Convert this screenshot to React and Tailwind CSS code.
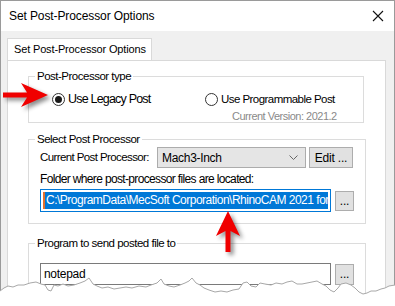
import React from "react";

const tear = [
  [0, 291], [4, 288], [8, 286], [13, 287], [18, 285], [24, 285], [30, 283], [36, 282], [41, 284],
  [45, 285], [48, 290], [51, 291], [54, 285], [58, 286], [63, 284], [68, 286], [74, 285], [80, 283],
  [85, 281], [89, 278], [93, 284], [97, 286], [102, 288], [108, 287], [114, 289], [120, 288],
  [126, 287], [132, 288], [139, 286], [146, 287], [151, 285], [157, 283], [161, 279], [164, 284],
  [169, 286], [174, 287], [180, 285], [185, 283], [189, 281], [192, 278], [196, 283], [200, 285],
  [204, 288], [209, 290], [215, 292], [221, 291], [227, 292], [233, 290], [239, 289], [243, 283],
  [247, 282], [251, 286], [256, 287], [260, 283], [265, 284], [271, 285], [276, 283], [282, 284],
  [287, 282], [292, 281], [297, 284], [302, 284], [307, 283], [312, 282], [317, 281], [322, 284],
  [326, 286], [330, 290], [334, 292], [338, 288], [341, 284], [346, 283], [351, 285], [355, 288],
  [359, 292], [363, 294], [367, 293], [371, 291], [376, 291], [381, 289], [385, 288], [389, 286],
  [395, 285],
];

const tearLine = tear.map(([x, y], i) => `${i ? "L" : "M"}${x},${y}`).join(" ");

const Radio = ({ checked }) => (
  <span className="w-[13px] h-[13px] rounded-full border border-[#333] bg-white flex items-center justify-center shrink-0">
    {checked && <span className="w-[7px] h-[7px] rounded-full bg-[#1a1a1a]" />}
  </span>
);

const Group = ({ title, className, children }) => (
  <fieldset className={`border border-[#dcdcdc] mx-0 px-[11px] ${className}`}>
    <legend className="-ml-[5px] px-[2px] text-[11.5px] leading-[13px] tracking-[-0.5px] whitespace-nowrap">
      {title}
    </legend>
    {children}
  </fieldset>
);

const SmallButton = ({ children, className }) => (
  <div
    className={`bg-[#e1e1e1] border border-[#adadad] flex items-center justify-center text-[12px] tracking-[-0.2px] whitespace-nowrap shrink-0 ${className}`}
  >
    {children}
  </div>
);

export default function App() {
  return (
    <div
      className="relative w-[395px] h-[306px] overflow-hidden bg-white text-black"
      style={{ fontFamily: '"Liberation Sans", Arial, sans-serif' }}
    >
      <div className="w-[395px] h-[306px] border-x border-t border-[#9a9a9a] flex flex-col">
        <div className="h-[30px] bg-white flex items-center justify-between pl-[8px] pr-[9px] shrink-0">
          <span className="text-[12px] tracking-[-0.1px] whitespace-nowrap">Set Post-Processor Options</span>
          <svg width="12" height="12" viewBox="0 0 12 12" className="mr-[1px]">
            <path d="M1 1 L11 11 M11 1 L1 11" stroke="#111" strokeWidth="1.1" />
          </svg>
        </div>

        <div className="flex-1 bg-[#f0f0f0] pl-[6px] pr-[8px] pt-[7px] flex flex-col">
          <div className="w-[145px] h-[22px] bg-white border border-b-0 border-[#d9d9d9] flex items-center pl-[6px] text-[11px] tracking-[-0.15px] whitespace-nowrap">
            Set Post-Processor Options
          </div>

          <div className="flex-1 bg-white border border-[#d9d9d9] pl-[20px] pr-[21px] pt-[9px]">
            <Group title="Post-Processor type" className="h-[53px]">
              <div className="flex mt-[9px]">
                <div className="flex items-center ml-[12px] gap-[3px] w-[153px] h-[14px] shrink-0">
                  <Radio checked />
                  <span className="text-[12.5px] leading-[14px] tracking-[-0.8px] whitespace-nowrap">Use Legacy Post</span>
                </div>
                <div className="flex flex-col">
                  <div className="flex items-center gap-[3px] h-[14px]">
                    <Radio />
                    <span className="text-[11.5px] leading-[14px] tracking-[-0.55px] whitespace-nowrap">Use Programmable Post</span>
                  </div>
                  <span className="ml-[27px] mt-[4px] text-[11px] leading-[13px] text-[#8a8a8a] tracking-[-0.5px] whitespace-nowrap">
                    Current Version: 2021.2
                  </span>
                </div>
              </div>
            </Group>

            <Group title="Select Post Processor" className="h-[91px] mt-[10px]">
              <div className="flex items-center mt-[1px]">
                <span className="text-[11.5px] tracking-[-0.6px] w-[117px] shrink-0 whitespace-nowrap">Current Post Processor:</span>
                <div className="w-[149px] h-[21px] shrink-0 bg-[#e5e5e5] border border-[#acacac] flex items-center justify-between pl-[4px] pr-[7px]">
                  <span className="text-[12px] tracking-[-0.3px] whitespace-nowrap">Mach3-Inch</span>
                  <svg width="9" height="6" viewBox="0 0 9 6">
                    <path d="M0.5 0.5 L4.5 4.5 L8.5 0.5" stroke="#666" strokeWidth="1" fill="none" />
                  </svg>
                </div>
                <SmallButton className="w-[44px] h-[21px] ml-[3px]">Edit ...</SmallButton>
              </div>
              <div className="text-[12px] tracking-[-0.65px] mt-[4px] leading-[14px] whitespace-nowrap">
                Folder where post-processor files are located:
              </div>
              <div className="flex items-center mt-[3px]">
                <div className="w-[291px] h-[23px] shrink-0 border border-[#0078d7] bg-white p-[2px] overflow-hidden">
                  <div className="h-full bg-[#0078d7] text-white text-[12px] leading-[17px] tracking-[-0.5px] whitespace-nowrap overflow-hidden border-l-2 border-[#e07030] pl-[1px]">
                    C:\ProgramData\MecSoft Corporation\RhinoCAM 2021 for Rhino
                  </div>
                </div>
                <SmallButton className="w-[19px] h-[20px] ml-[4px]">...</SmallButton>
              </div>
            </Group>

            <Group title="Program to send posted file to" className="h-[70px] mt-[13px]">
              <div className="flex items-center mt-[13px]">
                <div className="w-[291px] h-[22px] shrink-0 border border-[#7a7a7a] bg-white flex items-center pl-[3px] text-[12px] tracking-[-0.3px]">
                  notepad
                </div>
                <SmallButton className="w-[19px] h-[21px] ml-[4px]">...</SmallButton>
              </div>
            </Group>
          </div>
        </div>
      </div>

      {/* torn paper edge */}
      <svg className="absolute left-0 top-0" width="395" height="306" viewBox="0 0 395 306">
        <path d={`${tearLine} L395,306 L0,306 Z`} fill="#ffffff" />
        <path d={tearLine} fill="none" stroke="#a8a8a8" strokeWidth="1" />
      </svg>

      {/* annotation arrows */}
      <svg
        className="absolute left-0 top-0 drop-shadow-[3px_3px_2px_rgba(0,0,0,0.45)]"
        width="395"
        height="306"
        viewBox="0 0 395 306"
      >
        <path d="M3,92.5 L27,92.5 L21,83 L48,95 L21,107 L27,97.5 L3,97.5 Z" fill="#f00000" />
        <path d="M225.5,252 L225.5,231 L216,236 L228,211 L240,236 L230.5,231 L230.5,252 Z" fill="#f00000" />
      </svg>
    </div>
  );
}
